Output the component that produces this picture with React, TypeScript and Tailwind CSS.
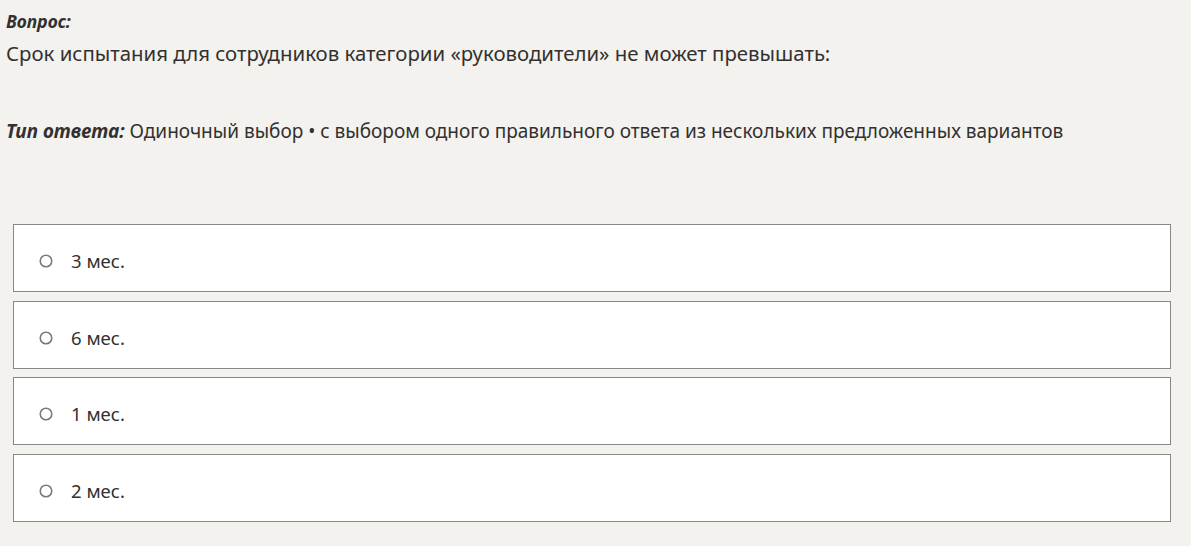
const options = ["3 мес.", "6 мес.", "1 мес.", "2 мес."];

export default function App() {
  return (
    <div
      className="w-full min-h-[546px] bg-[#f3f2ef] text-[#323130] px-[6px] pt-[12px]"
      style={{ fontFamily: '"Noto Sans", "Open Sans", sans-serif' }}
    >
      <div className="text-[17.5px] leading-[18px] font-bold italic">Вопрос:</div>
      <p className="text-[20.4px] leading-[28px] mt-[9px]">
        Срок испытания для сотрудников категории «руководители» не может превышать:
      </p>
      <p className="text-[19px] leading-[26px] mt-[51px]">
        <span className="font-bold italic">Тип ответа:</span> Одиночный выбор • с выбором одного
        правильного ответа из нескольких предложенных вариантов
      </p>

      <div className="mt-[80px] ml-[7px] mr-[14px] flex flex-col gap-[8.67px]">
        {options.map((o) => (
          <label
            key={o}
            className="flex items-center h-[68px] bg-white border border-[#8a8886] pl-[25px] pt-[6px]"
          >
            <svg width="14" height="14" viewBox="0 0 14 14" className="shrink-0">
              <circle cx="7" cy="7" r="5.75" fill="none" stroke="#7a7a7a" strokeWidth="1.6" />
            </svg>
            <span className="ml-[18px] text-[18.5px] leading-[24px]">{o}</span>
          </label>
        ))}
      </div>
    </div>
  );
}
